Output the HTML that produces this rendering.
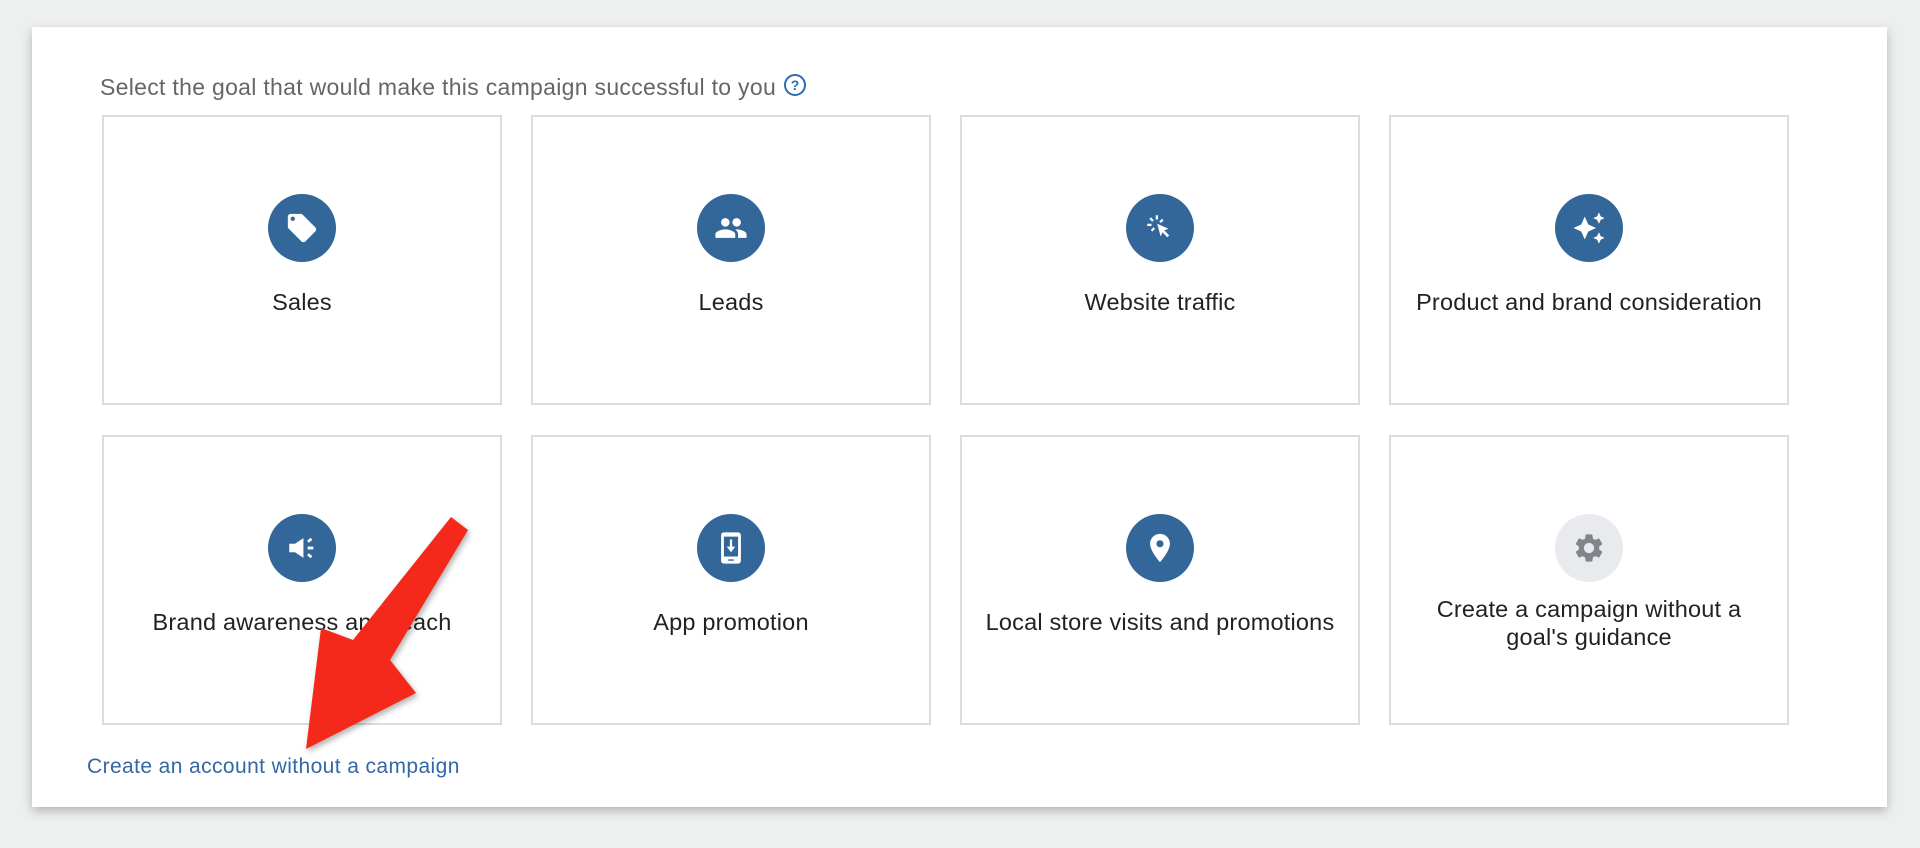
<!DOCTYPE html>
<html><head><meta charset="utf-8"><style>
html,body{margin:0;padding:0;}
body{width:1920px;height:848px;background:#eef0f0;position:relative;overflow:hidden;font-family:"Liberation Sans",Arial,sans-serif;}
.panel{position:absolute;left:32px;top:27px;width:1855px;height:780px;background:#fff;box-shadow:0 4px 10px rgba(0,0,0,.25);}
.title{position:absolute;left:100px;top:74px;font-size:23px;letter-spacing:0.3px;color:#666;}
.help{display:inline-block;width:18px;height:18px;border:2px solid #2f6cb0;border-radius:50%;color:#2f6cb0;font-size:14px;text-align:center;line-height:18px;vertical-align:5px;margin-left:8px;font-weight:bold;letter-spacing:0;}
.card{position:absolute;width:400px;height:290px;border:2px solid #dadce0;background:#fff;box-sizing:border-box;}
.circ{position:absolute;left:50%;top:77px;width:68px;height:68px;margin-left:-34px;border-radius:50%;background:#336699;}
.circ svg{position:absolute;left:17px;top:17px;width:34px;height:34px;fill:#fff;}
.lbl{position:absolute;left:0;right:0;top:171px;text-align:center;font-size:23.5px;color:#222;line-height:28px;letter-spacing:0.2px;}
.link{position:absolute;left:87px;top:755px;font-size:21px;letter-spacing:0.4px;color:#3367a6;}
</style></head><body>
<div class="panel"></div>
<div class="title">Select the goal that would make this campaign successful to you<span class="help">?</span></div>

<div class="card" style="left:102px;top:115px"><div class="circ"><svg viewBox="0 0 24 24"><path d="M21.41 11.58l-9-9C12.05 2.22 11.55 2 11 2H4c-1.1 0-2 .9-2 2v7c0 .55.22 1.05.59 1.42l9 9c.36.36.86.58 1.41.58.55 0 1.05-.22 1.41-.59l7-7c.37-.36.59-.86.59-1.41 0-.55-.23-1.06-.59-1.42zM5.5 7C4.67 7 4 6.33 4 5.5S4.67 4 5.5 4 7 4.67 7 5.5 6.33 7 5.5 7z"/></svg></div><div class="lbl">Sales</div></div>
<div class="card" style="left:531px;top:115px"><div class="circ"><svg viewBox="0 0 24 24"><path d="M16 11c1.66 0 2.99-1.34 2.99-3S17.66 5 16 5c-1.66 0-3 1.34-3 3s1.34 3 3 3zm-8 0c1.66 0 2.99-1.34 2.99-3S9.66 5 8 5C6.34 5 5 6.34 5 8s1.34 3 3 3zm0 2c-2.33 0-7 1.17-7 3.5V19h14v-2.5c0-2.33-4.67-3.5-7-3.5zm8 0c-.29 0-.62.02-.97.05 1.16.84 1.97 1.97 1.97 3.45V19h6v-2.5c0-2.33-4.67-3.5-7-3.5z"/></svg></div><div class="lbl">Leads</div></div>
<div class="card" style="left:960px;top:115px"><div class="circ"><svg viewBox="0 0 24 24"><path d="M10 9l8 3.5-3 1.2 3.5 3.5-1.3 1.3-3.5-3.5-1.2 3z"/><rect x="9" y="3" width="1.6" height="3"/><rect x="3" y="9" width="3" height="1.6"/><path d="M4.5 5.6l1.1-1.1 2 2-1.1 1.1zM13.4 5.5l1.1 1.1-1.9 1.9-1.1-1.1zM5.5 13.4l1.9-1.9 1.1 1.1-1.9 1.9z"/></svg></div><div class="lbl">Website traffic</div></div>
<div class="card" style="left:1389px;top:115px"><div class="circ"><svg viewBox="0 0 24 24"><path d="M19 9l1.25-2.75L23 5l-2.75-1.25L19 1l-1.25 2.75L15 5l2.75 1.25L19 9zm-7.5.5L9 4 6.5 9.5 1 12l5.5 2.5L9 20l2.5-5.5L17 12l-5.5-2.5zM19 15l-1.25 2.75L15 19l2.75 1.25L19 23l1.25-2.75L23 19l-2.75-1.25L19 15z"/></svg></div><div class="lbl">Product and brand consideration</div></div>

<div class="card" style="left:102px;top:435px"><div class="circ"><svg viewBox="0 0 24 24"><path d="M3 9h4l6-4v14l-6-4H3z"/><rect x="16" y="11" width="4" height="2"/><path d="M15.6 6.8l2.5-2 1.2 1.5-2.5 2zM15.6 17.2l1.2-1.5 2.5 2-1.2 1.5z"/></svg></div><div class="lbl">Brand awareness and reach</div></div>
<div class="card" style="left:531px;top:435px"><div class="circ"><svg viewBox="0 0 24 24"><path d="M17 1H7c-1.1 0-2 .9-2 2v18c0 1.1.9 2 2 2h10c1.1 0 2-.9 2-2V3c0-1.1-.9-2-2-2zm0 17H7V4h10v14zM10 20h4v1h-4zM11.2 6h1.6v5h2.2L12 15l-3-4h2.2z"/></svg></div><div class="lbl">App promotion</div></div>
<div class="card" style="left:960px;top:435px"><div class="circ"><svg viewBox="0 0 24 24"><path d="M12 2C8.13 2 5 5.13 5 9c0 5.25 7 13 7 13s7-7.750 7-13c0-3.87-3.13-7-7-7zm0 9.5c-1.38 0-2.5-1.12-2.5-2.5s1.12-2.5 2.5-2.5 2.5 1.12 2.5 2.5-1.12 2.5-2.5 2.5z"/></svg></div><div class="lbl">Local store visits and promotions</div></div>
<div class="card" style="left:1389px;top:435px"><div class="circ" style="background:#e8eaed"><svg viewBox="0 0 24 24" style="fill:#80868b"><path d="M19.14 12.94c.04-.3.06-.61.06-.94 0-.32-.02-.64-.07-.94l2.03-1.58a.49.49 0 00.12-.61l-1.92-3.32a.488.488 0 00-.59-.22l-2.39.96c-.5-.38-1.03-.7-1.62-.94l-.36-2.54a.484.484 0 00-.48-.41h-3.84c-.24 0-.43.17-.47.41l-.36 2.54c-.59.24-1.13.57-1.62.94l-2.39-.96c-.22-.08-.47 0-.59.22L2.74 8.87c-.12.21-.08.47.12.61l2.030 1.58c-.05.3-.09.63-.09.94s.02.64.07.94l-2.03 1.58a.49.49 0 00-.12.61l1.92 3.32c.12.22.37.29.59.22l2.39-.96c.5.38 1.03.7 1.62.94l.36 2.54c.05.24.24.41.48.41h3.84c.24 0 .44-.17.47-.41l.36-2.54c.59-.24 1.13-.56 1.62-.94l2.39.96c.22.08.47 0 .59-.22l1.92-3.32c.12-.22.07-.47-.12-.61l-2.01-1.58zM12 15.6c-1.98 0-3.6-1.62-3.6-3.6s1.62-3.6 3.6-3.6 3.6 1.62 3.6 3.6-1.62 3.6-3.6 3.6z"/></svg></div><div class="lbl" style="top:158px">Create a campaign without a<br>goal's guidance</div></div>

<div class="link">Create an account without a campaign</div>

<svg style="position:absolute;left:0;top:0" width="1920" height="848"><polygon fill="#f4291c" points="451,517 468,530 390,660 416,693 306,749 321,628 353,640" style="filter:drop-shadow(2px 3px 3px rgba(0,0,0,.3))"/></svg>
</body></html>
